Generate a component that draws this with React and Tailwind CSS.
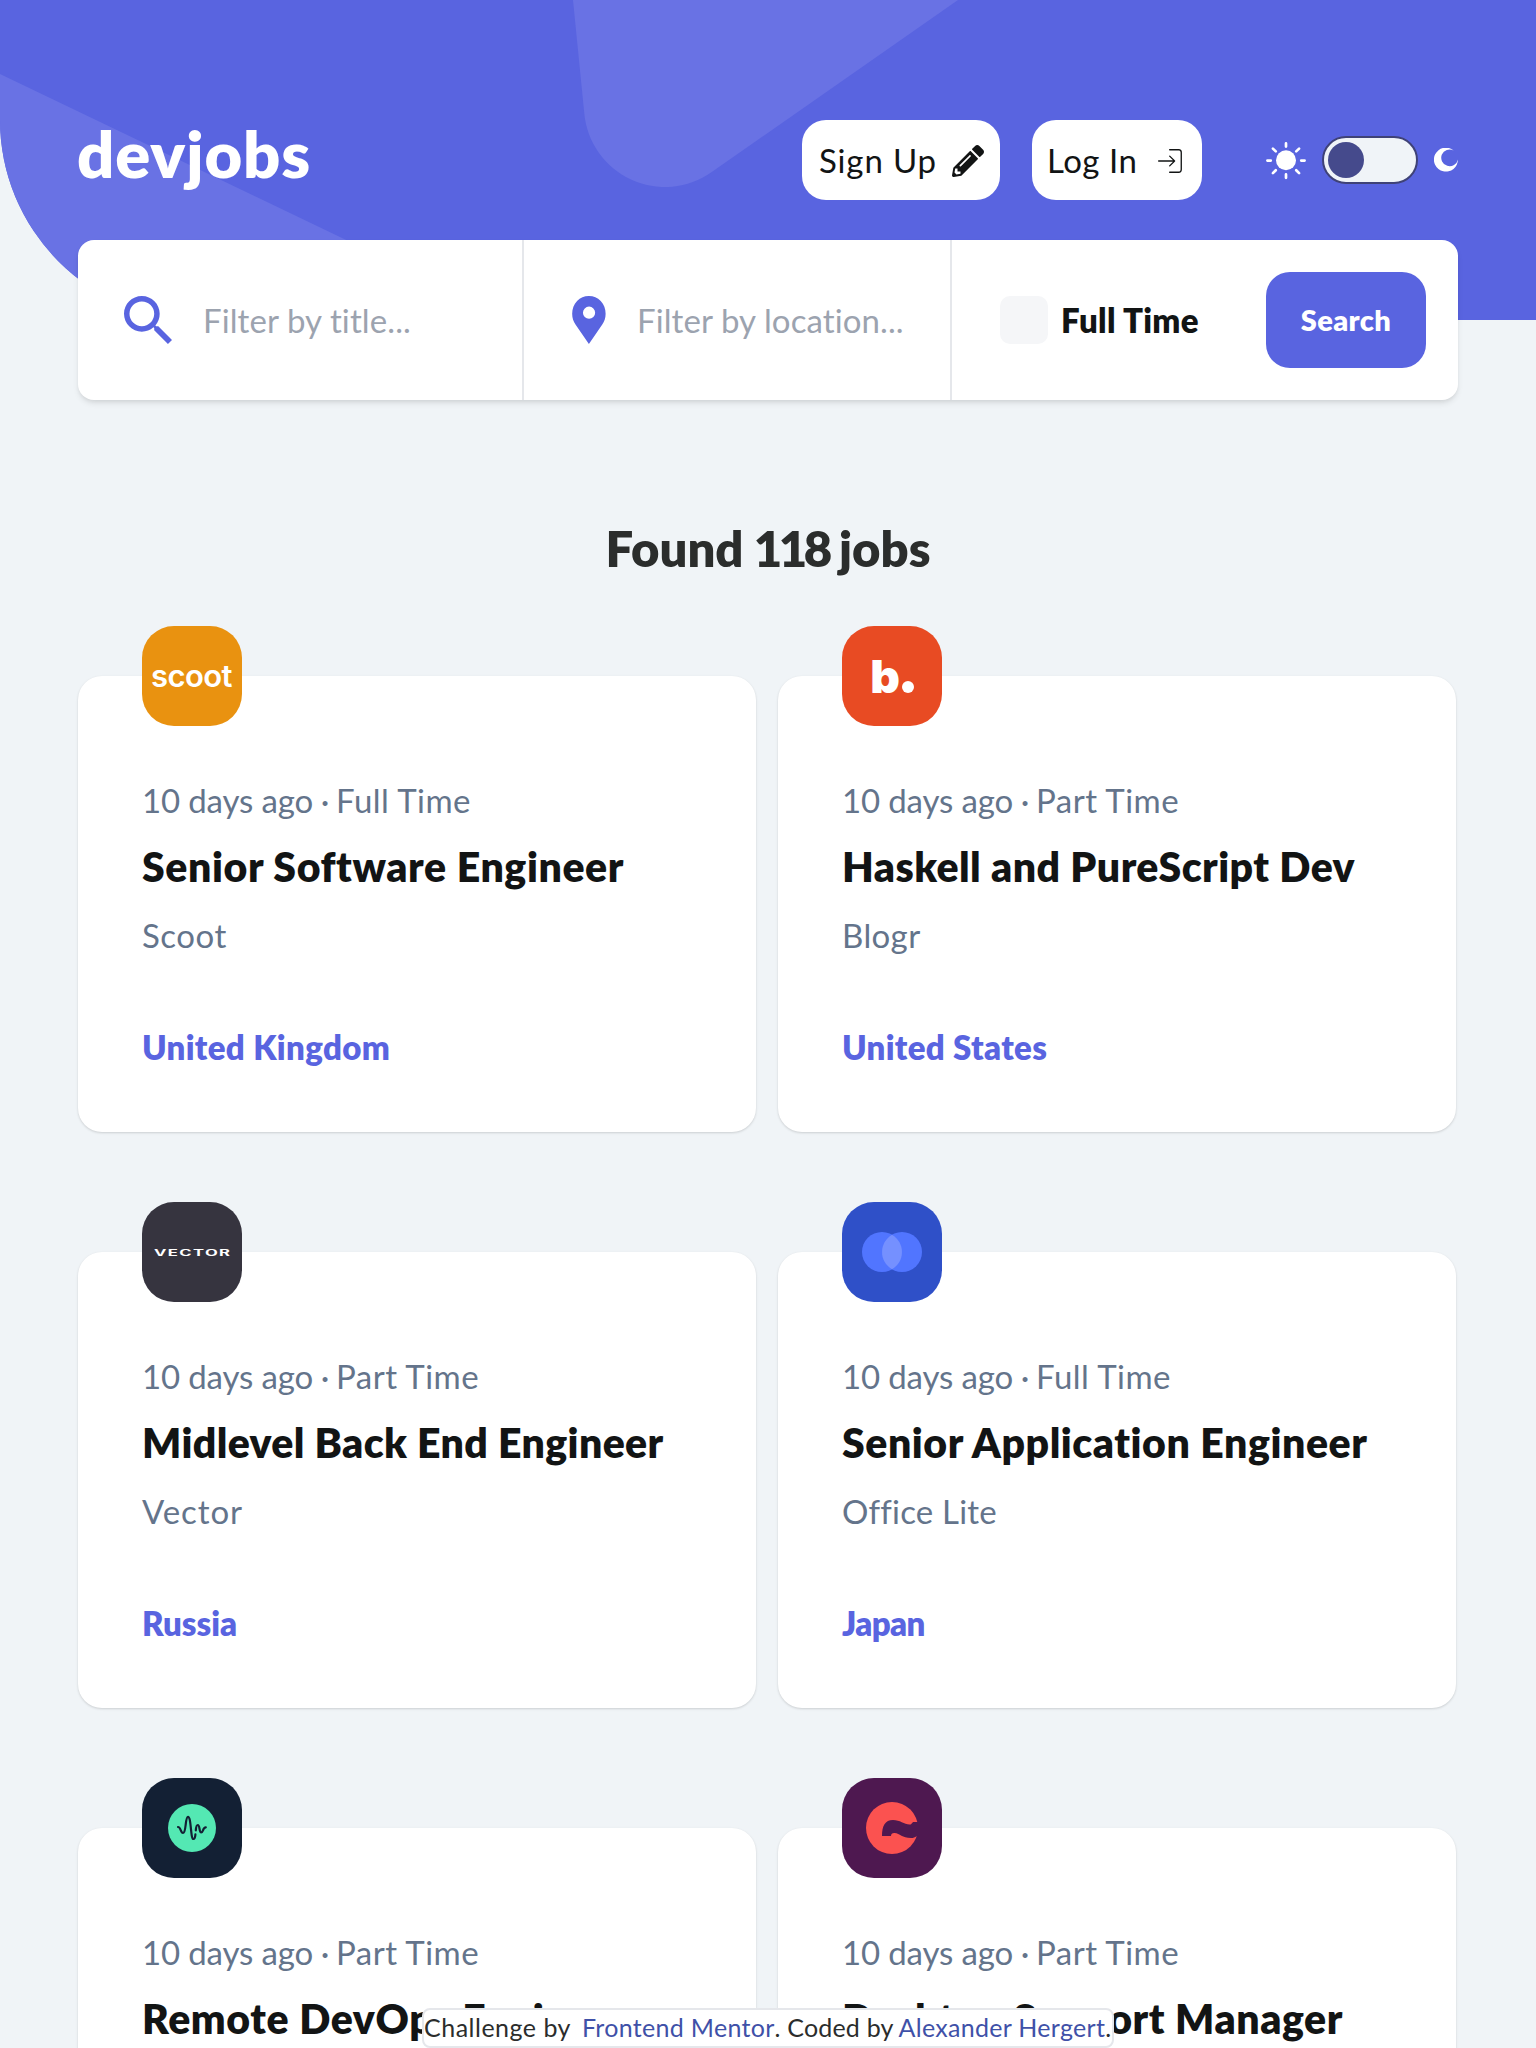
import { FaPencilAlt } from "react-icons/fa";
import { CiLogin } from "react-icons/ci";

function HeaderPattern() {
  return (
    <svg className="absolute inset-0 h-full w-full" viewBox="0 0 1536 320" fill="#6972e4" aria-hidden="true">
      <path d="M0 74L513 320H0Z" />
      <path d="M573 0L584.3 113.6A81 81 0 0 0 711.4 172.3L958 0Z" />
    </svg>
  );
}

function SunIcon() {
  return (
    <svg className="h-10 w-10" viewBox="0 0 40 40" aria-hidden="true">
      <circle cx="20" cy="20.3" r="10" fill="#fff" />
      <g stroke="#fff" strokeWidth="2.7" strokeLinecap="round">
        <path d="M1.4 20.6H4.8M35.2 20.6H38.6M20 3.4V6.6M20 34.4V37.8" />
        <path d="M6.9 8.6L9.8 11.4M33.1 8.6L30.2 11.4M6.9 33.1L9.8 30.2M33.1 33.1L30.2 30.2" />
      </g>
    </svg>
  );
}

function MoonIcon() {
  return (
    <svg className="h-6 w-6" viewBox="0 0 24 24" fill="#fff" aria-hidden="true">
      <path d="M19.6 2.4A8.4 8.4 0 1 0 23.9 11.4A12 12 0 1 1 19.6 2.4Z" />
    </svg>
  );
}

function SearchIcon() {
  return (
    <svg className="h-12 w-12" viewBox="0 0 24 24" fill="#5964e0" aria-hidden="true">
      <path
        fillRule="evenodd"
        d="M17.153 15.093h-1.085l-.385-.371a8.875 8.875 0 0 0 2.166-5.809C17.849 3.99 13.85 0 8.924 0S0 3.99 0 8.913s3.998 8.914 8.924 8.914a8.925 8.925 0 0 0 5.815-2.164l.372.385v1.084L21.974 24 24 21.947l-6.847-6.854zm-8.229 0a6.17 6.17 0 0 1-6.178-6.18 6.17 6.17 0 0 1 6.178-6.17 6.17 6.17 0 0 1 6.179 6.17 6.17 6.17 0 0 1-6.179 6.18z"
      />
    </svg>
  );
}

function PinIcon() {
  return (
    <svg className="h-12 w-[34px]" viewBox="0 0 17 24" fill="#5964e0" aria-hidden="true">
      <path
        fillRule="evenodd"
        d="M14.358 2.451A8.3 8.3 0 0 0 8.448 0a8.3 8.3 0 0 0-5.911 2.451c-2.922 2.925-3.285 8.427-.786 11.76L8.448 24l6.687-9.775c2.508-3.347 2.145-8.85-.777-11.774zM8.526 11.409a3.06 3.06 0 0 1-3.055-3.056 3.06 3.06 0 0 1 3.055-3.055 3.06 3.06 0 0 1 3.055 3.055 3.06 3.06 0 0 1-3.055 3.056z"
      />
    </svg>
  );
}

function ScootLogo() {
  return (
    <span className="pr-[1px] font-['Inter',sans-serif] text-[31px] leading-[40px] font-semibold tracking-[-0.6px] text-white">
      scoot
    </span>
  );
}

function BlogrLogo() {
  return (
    <span className="flex items-baseline gap-[2px] pb-[1px]">
      <span className="font-['Inter',sans-serif] text-[46px] leading-[48px] font-black text-white">b</span>
      <span className="h-3 w-3 rounded-full bg-white" />
    </span>
  );
}

function VectorLogo() {
  return (
    <svg className="h-[100px] w-[100px]" viewBox="0 0 100 100" aria-hidden="true">
      <text
        transform="translate(12 53.6) scale(2 1)"
        x="0"
        y="0"
        textLength="38"
        lengthAdjust="spacing"
        fill="#fff"
        className="font-['Inter',sans-serif] text-[8.3px] font-bold"
      >
        VECTOR
      </text>
    </svg>
  );
}

function OfficeLiteLogo() {
  return (
    <svg className="h-[100px] w-[100px]" viewBox="0 0 100 100" aria-hidden="true">
      <circle cx="40" cy="50" r="20" fill="#5175ff" />
      <circle cx="60" cy="50" r="20" fill="#5175ff" />
      <path d="M50 32.7A20 20 0 0 1 50 67.3A20 20 0 0 1 50 32.7Z" fill="#7590ff" />
    </svg>
  );
}

function PodLogo() {
  return (
    <svg className="h-[100px] w-[100px]" viewBox="0 0 100 100" fill="none" aria-hidden="true">
      <circle cx="50" cy="50" r="24" fill="#54e8b3" />
      <g stroke="#132034" strokeWidth="2.2" strokeLinecap="round" strokeLinejoin="round">
        <path d="M36 49C39 49 38.4 55 41 55C44.4 55 43 38.8 46 38.8C49.4 38.8 48.4 61 51.4 61C53.2 61 53.2 59 53.4 56.4" />
        <path d="M53.8 52.4C54 49.6 54.2 47 55.8 47C58 47 57 54.4 59.2 54.4C61.4 54.4 60.6 49.6 63.8 49.4" />
      </g>
    </svg>
  );
}

function CreativeLogo() {
  return (
    <svg className="h-[100px] w-[100px]" viewBox="0 0 100 100" aria-hidden="true">
      <circle cx="50" cy="50" r="26" fill="#fb5250" />
      <path
        d="M78 44H72C70 43.6 70 46.8 67.6 46.6C62 46.2 58 42 51 42C43 42 40 48 40 58H49C49 55.8 50.4 54.8 52.6 55C58 55.4 60 60 69 60C71.4 60 73 59.4 74.4 58.2L78 58Z"
        fill="#4e1850"
      />
    </svg>
  );
}

const jobs = [
  { logo: ScootLogo, bg: "bg-[#e99210]", contract: "Full Time", title: "Senior Software Engineer", titleTrack: "tracking-[0.59px]", company: "Scoot", companyTrack: "tracking-[0.5px]", country: "United Kingdom", countryTrack: "tracking-[0.36px]" },
  { logo: BlogrLogo, bg: "bg-[#e84b23]", contract: "Part Time", title: "Haskell and PureScript Dev", titleTrack: "tracking-[0.42px]", company: "Blogr", companyTrack: "tracking-[0.4px]", country: "United States", countryTrack: "tracking-[0.35px]" },
  { logo: VectorLogo, bg: "bg-[#36343f]", contract: "Part Time", title: "Midlevel Back End Engineer", titleTrack: "tracking-[0.36px]", company: "Vector", companyTrack: "tracking-[0.9px]", country: "Russia", countryTrack: "tracking-[0px]" },
  { logo: OfficeLiteLogo, bg: "bg-[#2f50c8]", contract: "Full Time", title: "Senior Application Engineer", titleTrack: "tracking-[0.55px]", company: "Office Lite", companyTrack: "tracking-[0.2px]", country: "Japan", countryTrack: "tracking-[-0.6px]" },
  { logo: PodLogo, bg: "bg-[#132034]", contract: "Part Time", title: "Remote DevOps Engineer", titleTrack: "tracking-[0.6px]", company: "Pod", companyTrack: "tracking-[0.5px]", country: "Thailand", countryTrack: "tracking-[0.6px]" },
  { logo: CreativeLogo, bg: "bg-[#4e1850]", contract: "Part Time", title: "Desktop Support Manager", titleTrack: "tracking-[0.55px]", company: "Creative", companyTrack: "tracking-[0.5px]", country: "Germany", countryTrack: "tracking-[0.6px]" },
];

function JobCard({ job }) {
  const Logo = job.logo;
  return (
    <article className="relative h-[456px] rounded-3xl bg-white px-16 pt-[100px] shadow-[0_1px_3px_rgba(0,0,0,0.1),0_1px_2px_rgba(0,0,0,0.06)]">
      <div className={`absolute -top-[50px] left-16 flex h-[100px] w-[100px] items-center justify-center overflow-hidden rounded-[32px] ${job.bg}`}>
        <Logo />
      </div>
      <p className="text-[33px] leading-[48px] tracking-[0.45px] whitespace-nowrap text-[#64748b]">
        <span className="tracking-[-0.15px]">10 days ago</span>
        <span className="tracking-[-0.8px]"> · </span>
        {job.contract}
      </p>
      <h2 className={`mt-[13px] text-[41px] leading-[60px] font-extrabold whitespace-nowrap text-[#121414] ${job.titleTrack}`}>{job.title}</h2>
      <p className={`mt-[14px] text-[33px] leading-[48px] text-[#64748b] ${job.companyTrack}`}>{job.company}</p>
      <p className={`mt-16 text-[33px] leading-[48px] font-extrabold text-[#5964e0] ${job.countryTrack}`}>{job.country}</p>
    </article>
  );
}

function TopBar() {
  return (
    <div className="flex h-20 items-center">
      <h1 className="-mt-[14px] -ml-[1px] text-[65px] leading-[80px] font-extrabold tracking-[0.9px] text-white">devjobs</h1>
      <div className="ml-auto flex items-center">
        <button className="flex h-20 w-[198px] items-center justify-between rounded-3xl bg-white pt-[1px] pr-4 pl-[17px] text-[33px] tracking-[0.85px] text-[#121414]">
          Sign Up
          <FaPencilAlt className="h-8 w-8" />
        </button>
        <button className="ml-8 flex h-20 w-[170px] items-center justify-between rounded-3xl bg-white pt-[1px] pr-4 pl-[15px] text-[33px] tracking-[0.5px] text-[#121414]">
          Log In
          <CiLogin className="h-8 w-8" />
        </button>
        <div className="ml-16 flex items-center">
          <SunIcon />
          <div className="mx-4 flex h-12 w-24 items-center rounded-3xl border-2 border-[#3f4277] bg-[#f0f4f8] pl-1">
            <div className="h-9 w-9 rounded-full bg-[#454a8c]" />
          </div>
          <MoonIcon />
        </div>
      </div>
    </div>
  );
}

function SearchBar() {
  return (
    <form className="mt-10 flex h-40 rounded-2xl bg-white shadow-[0_4px_6px_-1px_rgba(0,0,0,0.1),0_2px_4px_-1px_rgba(0,0,0,0.06)]">
      <label className="flex w-[446px] items-center border-r-2 border-[#e5e7eb] pl-[46px]">
        <SearchIcon />
        <span className="ml-[31px] text-[33px] leading-[48px] tracking-[0.1px] text-[#9ca3af]">Filter by title...</span>
      </label>
      <label className="flex w-[428px] items-center border-r-2 border-[#e5e7eb] pl-12">
        <PinIcon />
        <span className="ml-[31px] text-[33px] leading-[48px] tracking-[0.1px] whitespace-nowrap text-[#9ca3af]">Filter by location...</span>
      </label>
      <div className="flex flex-1 items-center pr-8 pl-12">
        <span className="h-12 w-12 rounded-[10px] bg-[#f5f6f8]" />
        <span className="ml-[13px] text-[33px] leading-[48px] font-extrabold tracking-[0.35px] text-[#121414]">Full Time</span>
        <button className="ml-auto h-24 w-40 rounded-3xl bg-[#5964e0] text-[29px] font-extrabold tracking-[0.4px] text-white">Search</button>
      </div>
    </form>
  );
}

function Attribution() {
  return (
    <footer className="absolute bottom-0 left-[422px] flex h-10 w-[692px] items-center rounded-lg border-2 border-[#e5e7eb] bg-white pb-[2px] text-[25px] leading-[34px] whitespace-nowrap text-[#2b2d2c]">
      <span className="w-[158px] tracking-[0.5px]">Challenge by</span>
      <a className="tracking-[0.3px] text-[#3f51a8]">Frontend Mentor</a>
      <span className="w-[124px] tracking-[0.2px]">. Coded by</span>
      <a className="tracking-[0.3px] text-[#3f51a8]">Alexander Hergert</a>
      <span>.</span>
    </footer>
  );
}

export default function App() {
  return (
    <div className="relative h-[2048px] w-[1536px] overflow-hidden bg-[#f0f4f7] font-['Lato',sans-serif]">
      <div className="absolute inset-x-0 top-0 h-80 overflow-hidden rounded-bl-[200px] bg-[#5964e0]">
        <HeaderPattern />
      </div>
      <div className="relative px-[78px] pt-[120px]">
        <TopBar />
        <SearchBar />
        <h2 className="mt-[118px] text-center text-[49px] leading-[60px] font-extrabold text-[#2b2d2c]">
          Found <span className="-mr-px -ml-px tracking-[-3.5px]">118</span> jobs
        </h2>
        <main className="mt-[98px] grid grid-cols-[678px_678px] gap-x-[22px] gap-y-[120px]">
          {jobs.map((job) => (
            <JobCard key={job.title} job={job} />
          ))}
        </main>
      </div>
      <Attribution />
    </div>
  );
}
